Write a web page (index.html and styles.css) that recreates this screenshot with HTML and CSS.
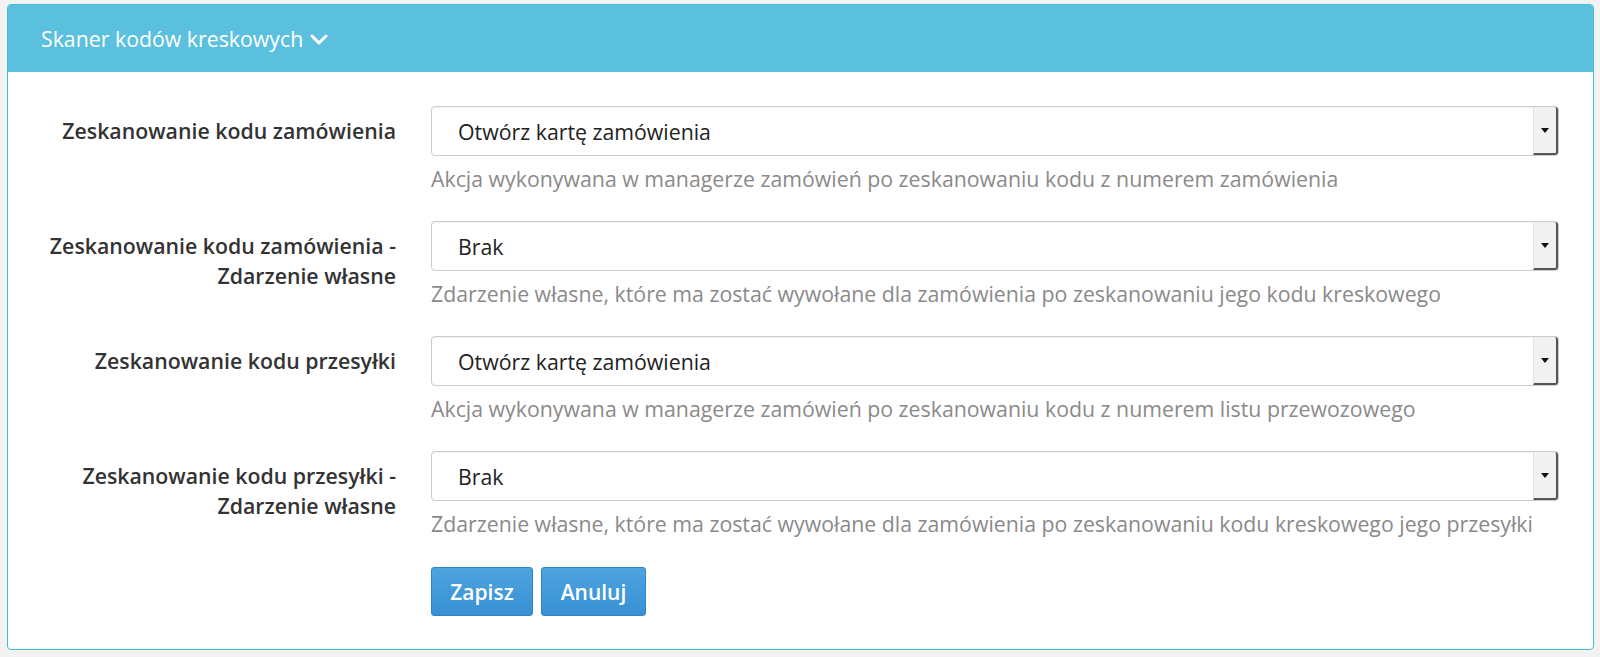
FILE: index.html
```html
<!DOCTYPE html>
<html lang="pl">
<head>
    <meta charset="UTF-8">
    <meta name="viewport" content="width=device-width, initial-scale=1.0">
    <title>Skaner kodów kreskowych</title>
    <link rel="stylesheet" href="styles.css">
</head>
<body>

<div class="panel">
    <div class="panel-heading">
        Skaner kodów kreskowych
        <svg class="chevron" width="18" height="11" viewBox="0 0 18 11">
            <path d="M2 2 L9 9 L16 2" fill="none" stroke="#fff" stroke-width="3" stroke-linecap="round" stroke-linejoin="round"/>
        </svg>
    </div>
    <form class="form-body">
        <div class="form-row">
            <label class="row-label">Zeskanowanie kodu zamówienia</label>
            <div class="field">
                <div class="select-box">
                    <span class="select-value">Otwórz kartę zamówienia</span>
                    <span class="select-arrow"></span>
                </div>
                <p class="hint">Akcja wykonywana w managerze zamówień po zeskanowaniu kodu z numerem zamówienia</p>
            </div>
        </div>
        <div class="form-row">
            <label class="row-label">Zeskanowanie kodu zamówienia -<br>Zdarzenie własne</label>
            <div class="field">
                <div class="select-box">
                    <span class="select-value">Brak</span>
                    <span class="select-arrow"></span>
                </div>
                <p class="hint">Zdarzenie własne, które ma zostać wywołane dla zamówienia po zeskanowaniu jego kodu kreskowego</p>
            </div>
        </div>
        <div class="form-row">
            <label class="row-label">Zeskanowanie kodu przesyłki</label>
            <div class="field">
                <div class="select-box">
                    <span class="select-value">Otwórz kartę zamówienia</span>
                    <span class="select-arrow"></span>
                </div>
                <p class="hint">Akcja wykonywana w managerze zamówień po zeskanowaniu kodu z numerem listu przewozowego</p>
            </div>
        </div>
        <div class="form-row">
            <label class="row-label">Zeskanowanie kodu przesyłki -<br>Zdarzenie własne</label>
            <div class="field">
                <div class="select-box">
                    <span class="select-value">Brak</span>
                    <span class="select-arrow"></span>
                </div>
                <p class="hint">Zdarzenie własne, które ma zostać wywołane dla zamówienia po zeskanowaniu kodu kreskowego jego przesyłki</p>
            </div>
        </div>
        <div class="form-row">
            <div></div>
            <div class="actions">
                <button type="button" class="btn">Zapisz</button>
                <button type="button" class="btn">Anuluj</button>
            </div>
        </div>
    </form>
</div>
<div class="panel panel-next"></div>

</body>
</html>
```

FILE: styles.css
```css
/* Barcode scanner settings panel */
body {
    margin: 0;
    padding: 4px 6px 0 7px;
    background-color: #f2f2f2;
    font-family: "Open Sans", Arial, sans-serif;
    color: #333;
}
.panel {
    background: #fff;
    border: 1px solid #46b8da;
    border-radius: 4px;
}
.panel-heading {
    display: flex;
    align-items: center;
    gap: 7px;
    height: 67px;
    padding: 0 33px;
    background-color: #5bc0de;
    color: #fff;
    font-size: 21.3px;
    border-radius: 3px 3px 0 0;
}
.chevron {
    margin-top: 2px;
}
.form-body {
    padding: 34px 34px 33px 0;
}
.form-row {
    display: grid;
    grid-template-columns: 388px 1fr;
    column-gap: 35px;
    margin-bottom: 27px;
}
.form-row:last-child {
    margin-bottom: 0;
}
.row-label {
    text-align: right;
    font-weight: 600;
    font-size: 21.3px;
    line-height: 30px;
    padding-top: 10px;
}
.select-box {
    display: flex;
    height: 48px;
    border: 1px solid #ccc;
    border-radius: 4px;
    box-shadow: inset 0 1px 1px rgba(0, 0, 0, 0.05);
}
.select-value {
    flex: 1;
    display: flex;
    align-items: center;
    padding-left: 26px;
    font-size: 21.3px;
    color: #222;
}
.select-arrow {
    width: 22px;
    background: #f1f1f1;
    border-left: 1px solid #e2e2e2;
    border-right: 2px solid #555;
    border-bottom: 2px solid #555;
    border-radius: 0 3px 3px 0;
    display: flex;
    align-items: center;
    justify-content: center;
}
.select-arrow::after {
    content: "";
    border-left: 4px solid transparent;
    border-right: 4px solid transparent;
    border-top: 5px solid #111;
}
.hint {
    margin: 8px 0 0;
    font-size: 21.3px;
    line-height: 30px;
    color: #8a8a8a;
}
.actions {
    display: flex;
    gap: 8px;
    padding-top: 1px;
}
.btn {
    width: 102px;
    height: 49px;
    font-family: "Open Sans", Arial, sans-serif;
    font-size: 21px;
    font-weight: 600;
    color: #fff;
    background: linear-gradient(#4ea4df, #3890d3);
    border: 1px solid #2f85c8;
    border-radius: 3px;
    cursor: pointer;
}
.btn + .btn {
    width: 105px;
}
.panel-next {
    margin-top: 7px;
    height: 20px;
    border-bottom: none;
}
```
